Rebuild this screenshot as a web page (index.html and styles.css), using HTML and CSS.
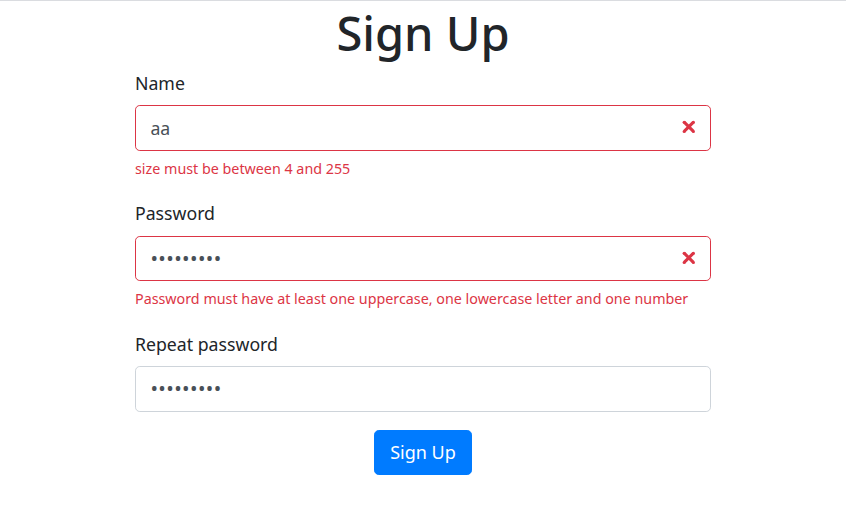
FILE: index.html
```html
<!DOCTYPE html>
<html lang="en">
<head>
<meta charset="utf-8">
<title>Sign Up</title>
<link rel="stylesheet" href="styles.css">
</head>
<body>
<div class="page">
  <h1 class="title">Sign Up</h1>
  <form class="form">
    <div class="group">
      <label class="label" for="name">Name</label>
      <div class="field">
        <input class="input invalid" id="name" type="text" value="aa">
        <svg class="x-icon" viewBox="-2 -2 7 7" fill="#dc3545"><path stroke="#dc3545" d="M0 0l3 3m0-3L0 3"/><circle r=".5"/><circle cx="3" r=".5"/><circle cy="3" r=".5"/><circle cx="3" cy="3" r=".5"/></svg>
      </div>
      <div class="feedback">size must be between 4 and 255</div>
    </div>
    <div class="group">
      <label class="label" for="pass">Password</label>
      <div class="field">
        <input class="input invalid secret" id="pass" type="password" value="123456789">
        <svg class="x-icon" viewBox="-2 -2 7 7" fill="#dc3545"><path stroke="#dc3545" d="M0 0l3 3m0-3L0 3"/><circle r=".5"/><circle cx="3" r=".5"/><circle cy="3" r=".5"/><circle cx="3" cy="3" r=".5"/></svg>
      </div>
      <div class="feedback">Password must have at least one uppercase, one lowercase letter and one number</div>
    </div>
    <div class="group">
      <label class="label" for="repeat">Repeat password</label>
      <div class="field">
        <input class="input secret" id="repeat" type="password" value="123456789">
      </div>
    </div>
    <div class="actions">
      <button class="btn" type="button">Sign Up</button>
    </div>
  </form>
</div>
</body>
</html>
```

FILE: styles.css
```css
html, body {
  margin: 0;
  padding: 0;
  background: #fff;
}
body {
  border-top: 1px solid #dadce0;
  font-family: "Noto Sans", "Open Sans", sans-serif;
  color: #212529;
}
.page {
  width: 576px;
  margin: 0 auto;
}
.title {
  margin: 0;
  padding-top: 4px;
  padding-bottom: 4.6px;
  font-size: 47px;
  line-height: 57.6px;
  font-weight: 500;
  text-align: center;
}
.form {
  display: flex;
  flex-direction: column;
}
.group {
  margin-bottom: 18.2px;
  display: flex;
  flex-direction: column;
}
.label {
  font-size: 17.7px;
  line-height: 28.8px;
  padding-top: 1.5px;
  margin-bottom: 7.5px;
}
.field {
  position: relative;
}
.input {
  box-sizing: border-box;
  width: 100%;
  height: 45.6px;
  padding: 7.2px 14.4px;
  border: 1.2px solid #ced4da;
  border-radius: 4.8px;
  font-family: inherit;
  font-size: 17.7px;
  color: #495057;
  background: #fff;
  outline: none;
  display: block;
}
.input.secret {
  font-size: 20px;
  letter-spacing: 0.4px;
}
.input.invalid {
  border-color: #dc3545;
  padding-right: 43.2px;
}
.x-icon {
  position: absolute;
  right: 11.5px;
  top: 11.5px;
  width: 21.6px;
  height: 21.6px;
}
.feedback {
  margin-top: 6px;
  font-size: 14.3px;
  line-height: 23px;
  color: #dc3545;
}
.actions {
  display: flex;
  justify-content: center;
}
.btn {
  font-family: inherit;
  font-size: 18px;
  line-height: 28.8px;
  padding: 7.2px 15px;
  border: 1.2px solid #007bff;
  border-radius: 4.8px;
  background: #007bff;
  color: #fff;
}
```
